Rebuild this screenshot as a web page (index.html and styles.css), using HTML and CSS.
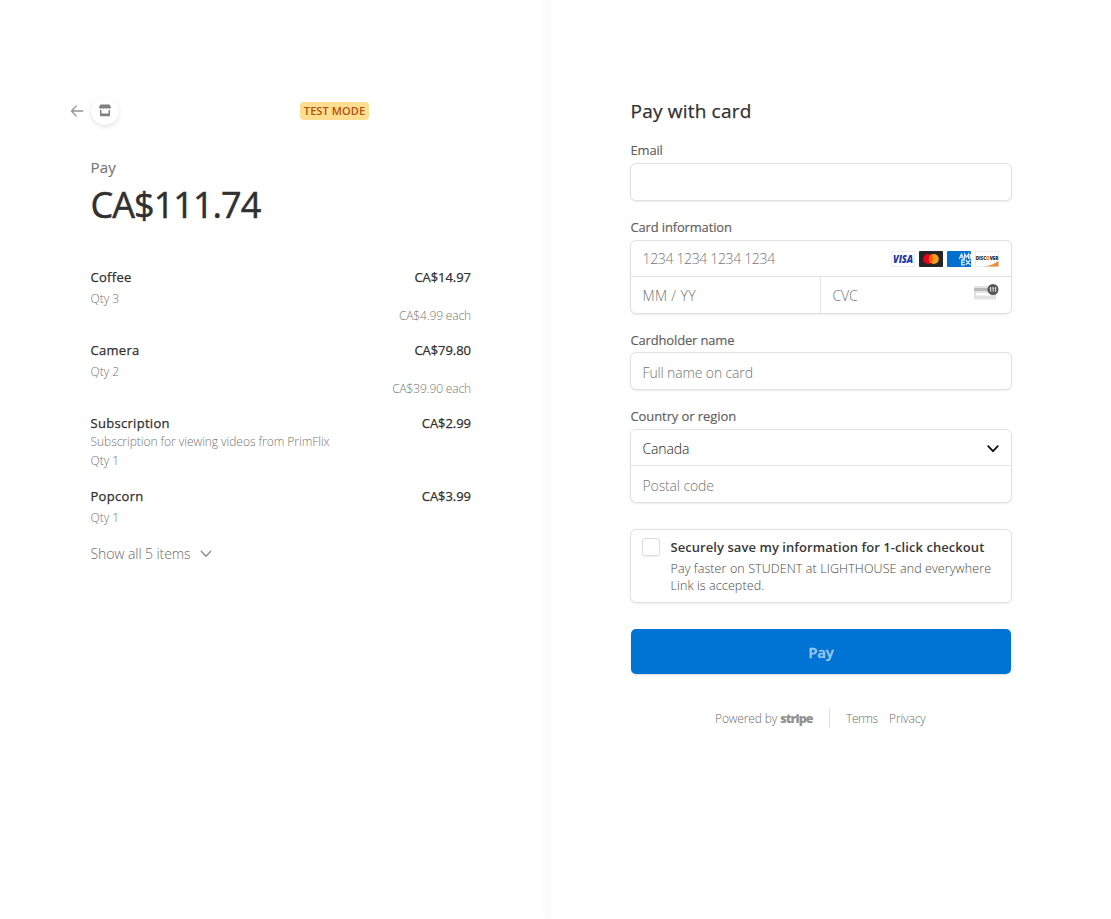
FILE: index.html
```html
<!DOCTYPE html>
<html lang="en">
<head>
<meta charset="utf-8">
<title>Checkout</title>
<link rel="stylesheet" href="styles.css">
</head>
<body>
<div class="checkout">
  <section class="summary">
    <header class="merchant">
      <svg class="back" width="14" height="14" viewBox="0 0 14 14"><path d="M6.300 1.900 1.500 7l4.800 5.100M1.600 7h11.200" fill="none" stroke="#949494" stroke-width="1.300" stroke-linecap="round" stroke-linejoin="round"/></svg>
      <span class="avatar"><svg width="12" height="13" viewBox="0 0 12 13"><path d="M2 .5h8c.5 0 .8.200 1 .6l.8 2c.3.900-.2 1.700-1.100 1.700-.7 0-1.200-.3-1.700-.8-.4.500-.9.800-1.500.800S6.400 4.500 6 4c-.4.500-.9.800-1.500.800S3.400 4.500 3 4c-.5.500-1 .8-1.700.8C.4 4.800-.1 4 .2 3.100l.8-2C1.200.7 1.500.5 2 .5Z" fill="#808080"/><path d="M1 6h1.500v3.500h7V6H11v6.300H1Z" fill="#808080"/></svg></span>
      <span class="test-badge">TEST MODE</span>
    </header>
    <p class="pay-label">Pay</p>
    <p class="total">CA$111.74</p>
    <ul class="items">
      <li class="item">
        <div class="row"><span class="name">Coffee</span><span class="price">CA$14.97</span></div>
        <div class="qty">Qty 3</div>
        <div class="each">CA$4.99 each</div>
      </li>
      <li class="item">
        <div class="row"><span class="name">Camera</span><span class="price">CA$79.80</span></div>
        <div class="qty">Qty 2</div>
        <div class="each">CA$39.90 each</div>
      </li>
      <li class="item">
        <div class="row"><span class="name">Subscription</span><span class="price">CA$2.99</span></div>
        <div class="desc">Subscription for viewing videos from PrimFlix</div>
        <div class="qty qty-after">Qty 1</div>
      </li>
      <li class="item item-last">
        <div class="row"><span class="name">Popcorn</span><span class="price">CA$3.99</span></div>
        <div class="qty">Qty 1</div>
      </li>
    </ul>
    <div class="show-all"><span>Show all 5 items</span><svg width="12" height="8" viewBox="0 0 12 8"><path d="m1.300 1.300 4.700 4.900 4.700-4.900" fill="none" stroke="#8c8c8c" stroke-width="1.400" stroke-linecap="round"/></svg></div>
  </section>

  <main class="payment">
    <h1>Pay with card</h1>
    <div class="label label-email">Email</div>
    <div class="box"><div class="field"></div></div>

    <div class="label label-card">Card information</div>
    <div class="box card-box">
      <div class="field upper"><span class="number">1234 1234 1234 1234</span>
        <span class="brands">
          <svg width="24" height="16" viewBox="0 0 24 16"><rect x=".5" y=".5" width="23" height="15" fill="#fff" stroke="#ececec"/><text x="12" y="12" class="visa" text-anchor="middle" textLength="20" lengthAdjust="spacingAndGlyphs">VISA</text></svg>
          <svg width="24" height="16" viewBox="0 0 24 16"><rect width="24" height="16" rx="1" fill="#252525"/><circle cx="9.200" cy="8" r="5" fill="#eb001b"/><circle cx="14.800" cy="8" r="5" fill="#f79e1b"/><path d="M12 3.860a5 5 0 0 1 0 8.280 5 5 0 0 1 0-8.280Z" fill="#ff5f00"/></svg>
          <svg width="24" height="16" viewBox="0 0 24 16"><rect width="24" height="16" rx="1" fill="#016fd0"/><path d="m12.300 8 2.200-5 2.200 5M13.200 6.200h2.700M17.600 8V3l2 3.200 2-3.200v5M23.300 3v5M18 9h-3.300v4.800H18M14.700 11.400h3M18.800 9l4.500 4.800M23.300 9l-4.500 4.800" fill="none" stroke="#d8eafa" stroke-width="1.300"/></svg>
          <svg width="24" height="16" viewBox="0 0 24 16"><rect x=".5" y=".5" width="23" height="15" fill="#fff" stroke="#ececec"/><path d="M23.500 10v5.500H9C15 14.600 20 12.700 23.500 10Z" fill="#ee8b36"/><text x=".8" y="9.400" class="discover" textLength="22.400" lengthAdjust="spacingAndGlyphs">DISC<tspan class="discover-dot">O</tspan>VER</text></svg>
        </span>
      </div>
      <div class="split">
        <div class="field half"><span class="expiry">MM / YY</span></div>
        <div class="field half cvc">CVC
          <svg class="cvc-icon" width="26" height="18" viewBox="0 0 26 18"><path d="M1 3h22v13.500H1z" fill="#e2e2e2"/><path d="M1 5h22v3H1z" fill="#bbb"/><path d="M3 10h15v2.500H3z" fill="#fff"/><circle cx="20" cy="6.500" r="5.500" fill="#555"/><path d="M16.700 5.200l1-.8v4.400M19.200 5.200l1-.8v4.400M21.700 5.200l1-.8v4.400" fill="none" stroke="#fff" stroke-width=".9"/></svg>
        </div>
      </div>
    </div>

    <div class="label label-name">Cardholder name</div>
    <div class="box"><div class="field">Full name on card</div></div>

    <div class="label label-country">Country or region</div>
    <div class="box">
      <div class="field upper selected"><span>Canada</span><svg width="12" height="8" viewBox="0 0 12 8"><path d="M1.200 1.200 6 6.200l4.800-5" fill="none" stroke="#111" stroke-width="1.800" stroke-linecap="round"/></svg></div>
      <div class="field under">Postal code</div>
    </div>

    <div class="box save">
      <span class="checkbox"></span>
      <div>
        <div class="save-title">Securely save my information for 1-click checkout</div>
        <div class="save-text">Pay faster on STUDENT at LIGHTHOUSE and everywhere<br>Link is accepted.</div>
      </div>
    </div>

    <button class="pay-button" type="button">Pay</button>

    <footer class="footer">
      <span class="powered">Powered by <b>stripe</b></span>
      <span class="terms">Terms</span>
      <span class="privacy">Privacy</span>
    </footer>
  </main>
</div>
</body>
</html>
```
FILE: styles.css
```css
* { box-sizing: border-box; }
body {
  margin: 0;
  background: #fff;
  font-family: "Open Sans", "Noto Sans", sans-serif;
  font-size: 13px;
  color: #303030;
}
p, ul, h1 { margin: 0; padding: 0; font-weight: 400; }
ul { list-style: none; }
svg { display: block; flex: none; }
.checkout { display: grid; grid-template-columns: 551px 560px; height: 919px; overflow: hidden; }

.summary {
  padding: 96px 80px 0 70px;
  background: linear-gradient(to right, #fff 540px, #fafafa 551px);
}
.merchant { display: flex; align-items: center; height: 29px; }
.avatar {
  display: grid; place-items: center;
  width: 28px; height: 28px; margin-left: 7px;
  border-radius: 50%; background: #fff;
  box-shadow: 0 2px 5px rgba(0, 0, 0, .1), 0 0 2px rgba(0, 0, 0, .03);
}
.test-badge {
  width: 69px; height: 18px; margin-left: 181px;
  border-radius: 4px; background: #ffde92; color: #b44f0a;
  font-size: 11px; font-weight: 600; line-height: 18px; text-align: center;
  letter-spacing: .1px; white-space: nowrap;
}
.pay-label { margin: 31px 0 0 20.500px; font-size: 15px; line-height: 22px; letter-spacing: .2px; color: #767676; -webkit-text-stroke: .15px; }
.total { margin: 5px 0 0 20.500px; font-size: 36px; line-height: 44px; letter-spacing: -.95px; -webkit-text-stroke: .5px; }
.items { margin: 40px 0 0 20.500px; width: 380.500px; }
.item { height: 73px; }
.item-last { height: 46px; }
.row { display: flex; justify-content: space-between; height: 20.500px; line-height: 20px; -webkit-text-stroke: .25px; }
.name { letter-spacing: .3px; }
.price { letter-spacing: -.05px; }
.qty { height: 22px; line-height: 22px; font-size: 12px; font-weight: 300; color: #747474; }
.qty-after { margin-top: 1px; }
.desc { height: 15px; line-height: 15px; font-size: 12px; font-weight: 300; color: #747474; letter-spacing: -.04px; white-space: nowrap; }
.each { height: 12px; line-height: 12px; font-size: 12px; font-weight: 300; color: #747474; text-align: right; letter-spacing: -.14px; }
.show-all { display: flex; align-items: center; gap: 9px; margin: 11px 0 0 20.500px; line-height: 22px; font-size: 14px; font-weight: 300; color: #6c6c6c; letter-spacing: -.08px; }

.payment { width: 461px; padding: 97px 0 0 79px; background: #fff; }
h1 { padding-left: .5px; font-size: 19px; line-height: 28px; height: 28px; letter-spacing: .2px; -webkit-text-stroke: .25px; }
.label { height: 20px; padding-left: .5px; line-height: 20px; letter-spacing: -.16px; color: #606060; -webkit-text-stroke: .15px; }
.label-email { margin: 15px 0 3px; }
.label-card { margin: 16px 0 3px; }
.label-name { margin: 16px 0 2px; }
.label-country { margin: 16px 0 3px; letter-spacing: -.09px; }
.box {
  border: 1px solid #e1e1e1; border-radius: 6px; background: #fff;
  box-shadow: 0 1px 2px rgba(0, 0, 0, .08);
}
.field {
  display: flex; align-items: center; justify-content: space-between;
  height: 36px; padding: 2px 12px 0 11.500px;
  font-size: 14px; font-weight: 300; color: #747474; letter-spacing: -.13px;
}
.upper { height: 35px; }
.card-box .field { padding-top: 0; }
.number { letter-spacing: -.34px; }
.expiry { letter-spacing: .35px; }
.split { display: flex; border-top: 1px solid #e4e4e4; }
.half { width: 189px; }
.cvc { width: 191px; border-left: 1px solid #e4e4e4; }
.cvc-icon { margin-bottom: 7px; }
.brands { display: flex; gap: 4px; }
.visa { font: italic 800 10px "Open Sans", sans-serif; fill: #2436a5; }
.discover { font: 800 4.500px "Open Sans", sans-serif; fill: #292929; }
.discover-dot { fill: #e7792b; }
.field.selected { color: #1e1e1e; padding-top: 2px; }
.under { height: 37px; border-top: 1px solid #e4e4e4; }
.save { display: flex; height: 74px; margin-top: 26px; padding: 7px 0 0 11px; }
.checkbox { width: 18px; height: 18px; margin: 1px 10.500px 0 0; border: 1px solid #dcdcdc; border-radius: 3px; box-shadow: 0 1px 1px rgba(0, 0, 0, .06); }
.save-title { height: 20px; line-height: 20px; letter-spacing: .06px; font-weight: 600; color: #383838; white-space: nowrap; }
.save-text { margin-top: 3px; font-size: 12.500px; font-weight: 300; line-height: 17px; letter-spacing: .1px; color: #484848; white-space: nowrap; }
.pay-button {
  display: block; width: 380px; height: 45px; margin: 26px 0 0 1px; padding: 1px 0 0; border: 0; border-radius: 5px;
  background: #0074d4; color: #99c8ef;
  font-family: inherit; font-size: 15px; font-weight: 600; -webkit-text-stroke: .3px; letter-spacing: -.2px;
  box-shadow: 0 1px 2px rgba(0, 0, 0, .15);
}
.footer { display: flex; margin: 34px 0 0 85px; height: 20px; line-height: 21px; font-size: 12px; font-weight: 300; color: #6d6d6d; }
.powered { width: 115px; border-right: 1px solid #e2e2e2; letter-spacing: -.13px; white-space: nowrap; }
.powered b { font-size: 12.500px; font-weight: 800; color: #929292; letter-spacing: -.9px; }
.terms { width: 43px; margin-left: 16px; letter-spacing: -.4px; }
.privacy { letter-spacing: -.1px; }
```
